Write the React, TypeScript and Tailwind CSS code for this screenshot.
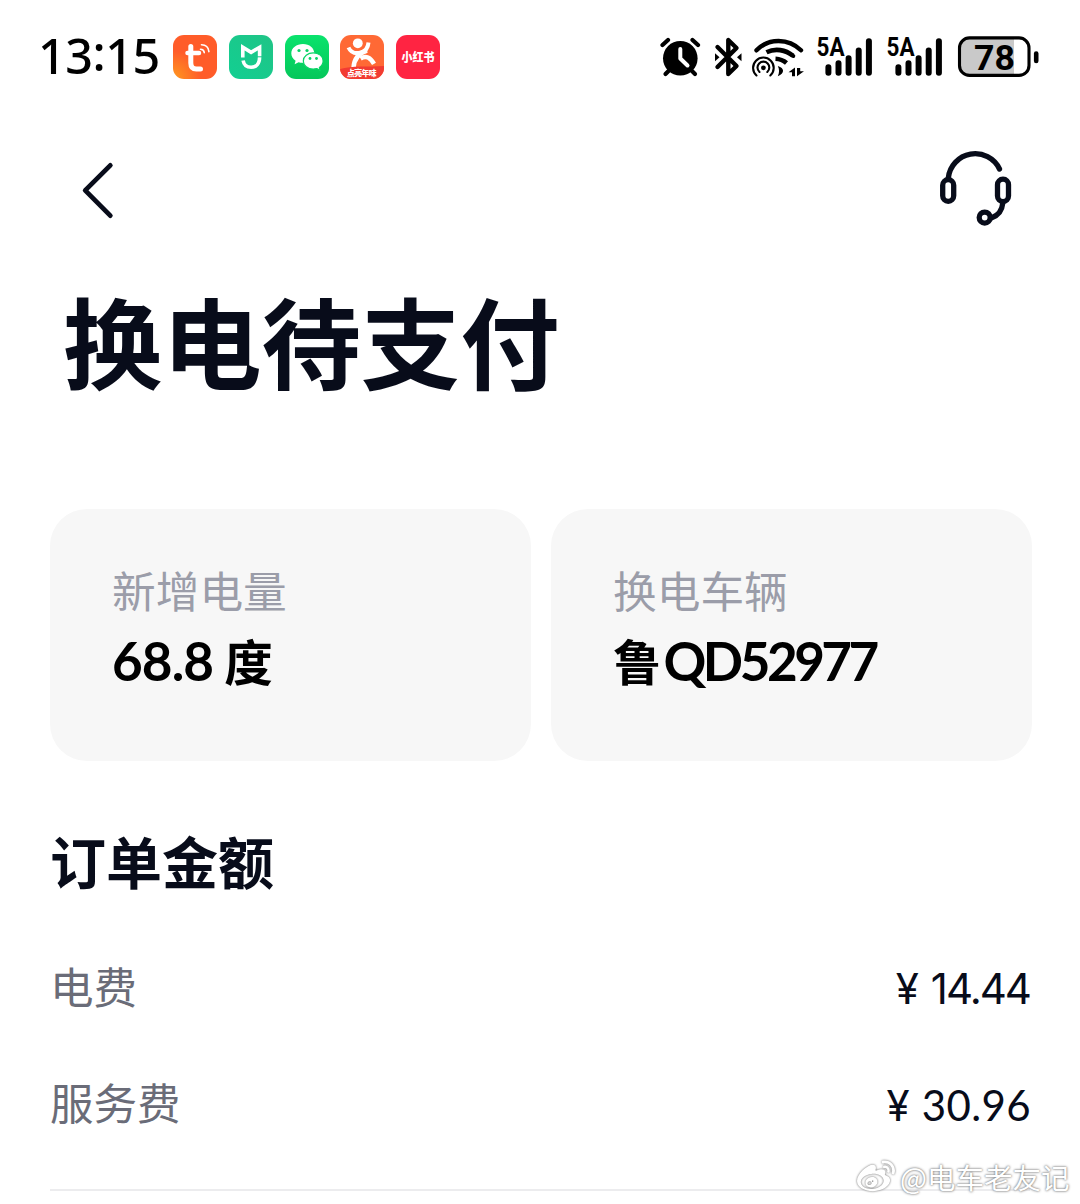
import type { ReactNode } from "react";
import { FaWeibo } from "react-icons/fa";

const INK = "#080c1a";

const cards = [
  {
    label: "新增电量",
    value: (
      <>
        <span className="tracking-[-0.900px]">68.8</span>
        <span className="ml-[11px] font-['Noto_Sans_CJK_SC',sans-serif] text-[48.500px]">度</span>
      </>
    ),
  },
  {
    label: "换电车辆",
    value: (
      <>
        <span className="font-['Noto_Sans_CJK_SC',sans-serif] text-[48.500px]">鲁</span>
        <span className="ml-0.5 tracking-[-3.500px]">QD52977</span>
      </>
    ),
  },
];

const fees = [
  { label: "电费", amount: "14.44", className: "font-[Inter,sans-serif] tracking-[-2px]" },
  { label: "服务费", amount: "30.96", className: "-mr-px font-[Lato,sans-serif] tracking-[0.400px]" },
];

function AppBadge({ className, children }: { className: string; children: ReactNode }) {
  return (
    <div className={`h-11 w-11 overflow-hidden rounded-[11px] ${className}`}>
      <svg viewBox="0 0 44 44" className="h-11 w-11">
        {children}
      </svg>
    </div>
  );
}

function AppBadges() {
  return (
    <div className="flex gap-[11.8px]">
      <AppBadge className="bg-[radial-gradient(circle_at_0%_100%,#ff9a1f,#ff5c29_45%)]">
        <g fill="none" stroke="#fff" strokeLinecap="round" strokeLinejoin="round">
          <path d="M17.800 11.500V28c0 4 2 6 5.500 6H27.500" strokeWidth="5" />
          <path d="M14.500 18H26" strokeWidth="4.500" />
          <path d="M27.500 14.200a4 4 0 0 1 3.800 3.400" strokeWidth="1.600" />
          <path d="M28.500 9.800c4.400 0 7 2.900 7.400 6.800" strokeWidth="1.600" />
        </g>
      </AppBadge>
      <AppBadge className="bg-[linear-gradient(45deg,#12cf92,#20c486)]">
        <g fill="none" stroke="#fff" strokeWidth="3.600">
          <path d="M13.800 22.500V12.300l8.300 5 8.500-5V22c0 6.500-3.300 10.300-8.500 10.300-4.200 0-7.200-2.300-8-6.800" />
        </g>
        <path d="M28 21.800h5.500" stroke="#1cc789" strokeWidth="1" />
      </AppBadge>
      <AppBadge className="bg-linear-to-b from-[#0ae36d] to-[#05c75a]">
        <path d="M18 9C11.400 9 6.300 13 6.300 18.300c0 3 1.600 5.600 4.300 7.400l-1 3.500 4-2c1.300.4 2.700.6 4.400.6 6.500 0 11.300-4.300 11.300-9.500S24.500 9 18 9Z" fill="#fff" />
        <path d="M28.300 17.800c-5.600 0-10 3.600-10 8.100s4.400 8.200 10 8.200c1.300 0 2.500-.2 3.600-.5l3.300 1.800-.8-3c2.400-1.600 3.700-3.800 3.700-6.500 0-4.500-4.200-8.100-9.800-8.100Z" fill="#fff" stroke="#09d466" strokeWidth="1.200" />
        <g fill="#08d466">
          <circle cx="14" cy="15.500" r="1.600" />
          <circle cx="22" cy="15.500" r="1.600" />
          <circle cx="25" cy="23.500" r="1.400" />
          <circle cx="31.500" cy="23.500" r="1.400" />
        </g>
      </AppBadge>
      <AppBadge className="bg-[#ff6935]">
        <circle cx="17.800" cy="8.300" r="4.900" fill="#fff" />
        <g fill="none" stroke="#fff">
          <path d="M8.500 12.500c2.500 5.500 6.500 6.300 11.500 5.300 5-1 8-4.300 8.500-10.300" strokeWidth="4" />
          <path d="M27 15.500C19 18 14 23.500 13.500 33" strokeWidth="4.500" />
          <path d="M20.500 23.500c5.500-3.500 10-1 13.500 5.300" strokeWidth="4.500" />
        </g>
        <path d="M0 34c12-3.500 28-2 44-3v13H0Z" fill="#f23b32" />
        <text x="7" y="40.500" fontSize="7.800" textLength="29.500" fontWeight="900" fill="#fff" fontFamily="'Noto Sans CJK SC', sans-serif">点亮年味</text>
      </AppBadge>
      <AppBadge className="bg-[#ff2442]">
        <text x="5.500" y="26.500" fontSize="12" textLength="33" lengthAdjust="spacingAndGlyphs" fontWeight="900" fill="#fff" fontFamily="'Noto Sans CJK SC', sans-serif">小红书</text>
      </AppBadge>
    </div>
  );
}

function AlarmIcon() {
  return (
    <svg viewBox="660 36 42 42" className="h-[42px] w-[42px]">
      <circle cx="680.300" cy="58.300" r="17.300" />
      <g fill="none" stroke="#000" strokeWidth="4.200" strokeLinecap="round">
        <path d="M662.500 45l5.500-5M698 45l-5.500-5" />
        <path d="M665.500 74l5-5M695 74l-5-5" />
      </g>
      <path d="M680.300 49v9.500l7.200 7" fill="none" stroke="#fff" strokeWidth="4" strokeLinecap="round" strokeLinejoin="round" />
    </svg>
  );
}

function BluetoothIcon() {
  return (
    <svg viewBox="713 36 30 42" className="ml-[11px] h-[42px] w-[30px]">
      <path d="M717.500 67l19-19-8.200-8v34l8.200-8-19-19" fill="none" stroke="#000" strokeWidth="4.400" strokeLinecap="round" strokeLinejoin="round" />
      <path d="M715 53.300v8l4.500-4ZM741.500 53.300v8l-4.500-4Z" />
    </svg>
  );
}

function WifiIcon() {
  return (
    <svg viewBox="751 36 54 42" className="ml-2 h-[42px] w-[54px]">
      <g fill="none" stroke="#000">
        <path d="M756.500 50.300c12-12.500 32-12.500 44.500 0" strokeWidth="4.400" strokeLinecap="round" />
        <path d="M766.500 52.300c9-4.500 19-2.500 26.500 3.500" strokeWidth="4.600" />
        <path d="M792 55l1.300 1" strokeWidth="4" strokeLinecap="round" />
        <path d="M775.500 58.800c4.500.2 8 1.700 11 4.300" strokeWidth="4.600" />
      </g>
      <g fill="none" stroke="#000" strokeWidth="2.100" strokeLinecap="round">
        <path d="M756.500 75.500a10.300 10.300 0 1 1 13.800 0" />
        <path d="M759.500 72a5.900 5.900 0 1 1 7.800 0" />
      </g>
      <circle cx="763.400" cy="67.800" r="2.400" />
      <path d="M777.800 66c7 2 7 7.500 0 10.200 1.700-3.500 1.700-6.700 0-10.200Z" />
      <path d="M788.500 72.300l6.500-4.800v8.700h-3v-3.900ZM797 68v8.200l7-4.900h-3.800V68Z" />
    </svg>
  );
}

function SignalIcon({ className }: { className: string }) {
  return (
    <svg viewBox="814 32 60 46" className={`-mt-1 h-[46px] w-[60px] overflow-visible ${className}`}>
      <text x="816.500" y="56" fontSize="25.500" fontWeight="700" textLength="28" lengthAdjust="spacingAndGlyphs" fontFamily="Roboto, sans-serif">5A</text>
      <g stroke="#000" strokeWidth="6" strokeLinecap="round">
        <path d="M828.400 67.300V72.700M838.500 63.200V72.700M848.600 58.200V72.700M858.700 50.500V72.700M868.900 41.300V72.700" />
      </g>
    </svg>
  );
}

function BatteryIcon() {
  return (
    <svg viewBox="957 30 83 54" className="ml-[13px] h-[54px] w-[83px]">
      <path d="M969.500 38.500H1014V75.500H969.500a10 10 0 0 1-10-10v-17a10 10 0 0 1 10-10Z" fill="#c9c9c9" />
      <rect x="959.500" y="37.900" width="69.500" height="37.500" rx="10" fill="none" stroke="#000" strokeWidth="3.100" />
      <path d="M1036.200 53.500v7.500" stroke="#000" strokeWidth="4.600" strokeLinecap="round" />
      <text x="974" y="69.500" fontSize="35.500" fontWeight="700" textLength="41" lengthAdjust="spacingAndGlyphs" fontFamily="Roboto, sans-serif">78</text>
    </svg>
  );
}

function StatusBar() {
  return (
    <div className="flex h-[114px] items-center pr-10 pl-[38px] text-black">
      <div className="w-[135px] pb-1 font-['Noto_Sans',sans-serif] text-[48.500px] leading-[60px] font-medium tracking-[-0.500px]">
        13<span className="relative -top-[3px]">:</span>15
      </div>
      <AppBadges />
      <div className="ml-auto flex items-center">
        <AlarmIcon />
        <BluetoothIcon />
        <WifiIcon />
        <SignalIcon className="ml-[9px]" />
        <SignalIcon className="ml-2.5" />
        <BatteryIcon />
      </div>
    </div>
  );
}

function NavBar() {
  return (
    <div className="flex h-[140px] items-start justify-between pr-[60px] pl-[76px]">
      <button type="button" aria-label="返回" className="pt-10">
        <svg viewBox="76 154 44 72" className="h-[72px] w-11" fill="none" stroke={INK} strokeWidth="4.800" strokeLinecap="round" strokeLinejoin="round">
          <path d="M110.300 165.400 85.200 190.400l25.100 25.200" />
        </svg>
      </button>
      <button type="button" aria-label="客服" className="pt-[30px]">
        <svg viewBox="932 144 88 90" className="h-[90px] w-[88px]" fill="none" stroke={INK} strokeWidth="5.300" strokeLinecap="round">
          <path d="M948.300 179v-1a27 27 0 0 1 51.200-9" />
          <rect x="942.700" y="179.700" width="11" height="21.600" rx="5.500" />
          <rect x="997.500" y="179.200" width="11" height="22.400" rx="5.500" />
          <path d="M1002.800 203c-.8 8-4.800 12.500-11 14.700" />
          <circle cx="984.700" cy="217.600" r="5.500" />
        </svg>
      </button>
    </div>
  );
}

function Watermark() {
  return (
    <div className="absolute top-[1157px] left-[857px] flex h-10 items-center gap-[5px] text-white">
      <FaWeibo className="h-[38px] w-[38px] drop-shadow-[0_0_1px_#666]" />
      <span className="font-['Noto_Sans_CJK_SC',sans-serif] text-[28.500px] leading-10 whitespace-nowrap [text-shadow:0_0_2px_#777,0_0_3px_#999]">@电车老友记</span>
    </div>
  );
}

export default function App() {
  return (
    <div className="relative h-[1204px] w-[1080px] overflow-hidden bg-white font-[Lato,'Noto_Sans_CJK_SC',sans-serif] text-[#080c1a]">
      <StatusBar />
      <NavBar />
      <h1 className="pt-[25px] pl-[63px] font-['Noto_Sans_CJK_SC',sans-serif] text-[99.300px] leading-[120px] font-bold">换电待支付</h1>

      <div className="mt-[110px] flex gap-5 pr-12 pl-[50px]">
        {cards.map((card) => (
          <div key={card.label} className="h-[252px] flex-1 rounded-[37px] bg-[#f7f7f7] pt-[52px] pl-[62px]">
            <div className="font-['Noto_Sans_CJK_SC',sans-serif] text-[43.700px] leading-[56px] text-[#9b9da9]">{card.label}</div>
            <div className="mt-[13px] flex items-baseline text-[53px] leading-[60px] font-bold whitespace-nowrap text-black">{card.value}</div>
          </div>
        ))}
      </div>

      <h2 className="mt-[63px] pl-[50px] font-['Noto_Sans_CJK_SC',sans-serif] text-[56px] leading-[72px] font-bold">订单金额</h2>

      <div className="mt-[35px] px-[50px]">
        {fees.map((fee) => (
          <div key={fee.label} className="flex h-[116px] items-center justify-between">
            <span className="pb-1.5 font-['Noto_Sans_CJK_SC',sans-serif] text-[43.500px] leading-[60px] text-[#6a6c78]">{fee.label}</span>
            <span className="flex items-baseline text-[42px] leading-[60px]">
              <span className="mr-3 font-[Inter,sans-serif]">¥</span>
              <span className={fee.className}>{fee.amount}</span>
            </span>
          </div>
        ))}
        <div className="mt-[26px] h-0.5 bg-[#ececee]" />
      </div>

      <Watermark />
    </div>
  );
}
